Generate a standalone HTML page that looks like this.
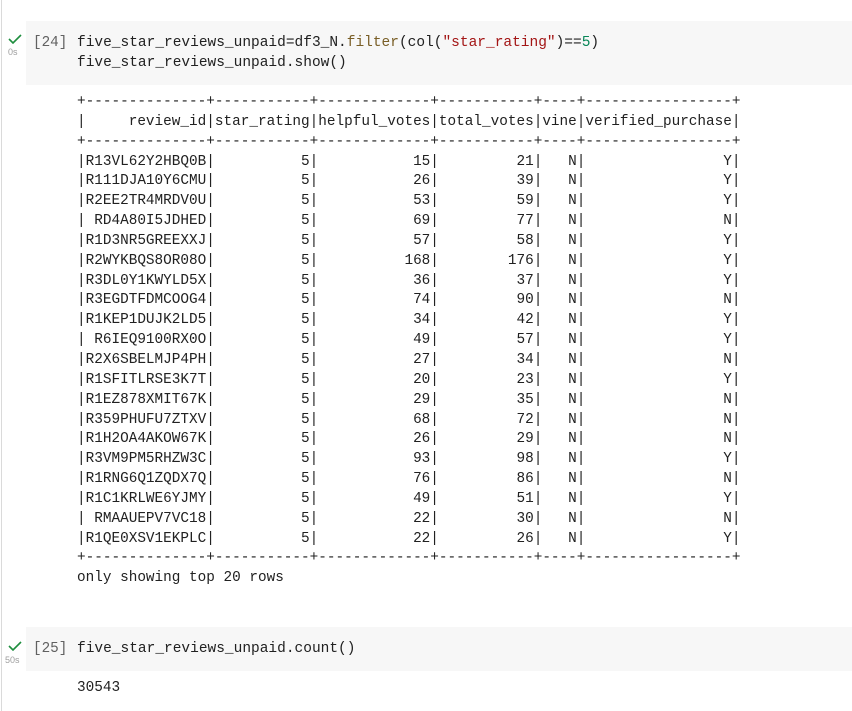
<!DOCTYPE html>
<html><head><meta charset="utf-8"><style>
body{margin:0;width:852px;height:711px;background:#fff;position:relative;overflow:hidden;font-family:"Liberation Mono",monospace;color:#212121}
.vl{position:absolute;left:1px;top:0;width:1px;height:711px;background:#dadada}
.cell{position:absolute;left:26px;width:826px;background:#f7f7f7}
.code{position:absolute;left:77px;font-size:14.5px;line-height:20px;white-space:pre}
.num{position:absolute;left:33px;font-size:14.3px;color:#616161;white-space:pre}
.chk{position:absolute;left:8px}
.t{position:absolute;font-family:"Liberation Sans",sans-serif;font-size:9px;color:#9e9e9e}
.out{position:absolute;left:77px;font-size:14.37px;line-height:19.84px;white-space:pre}
</style></head><body>
<div class="vl"></div>
<div class="cell" style="top:21px;height:64px"></div>
<svg class="chk" style="top:34px" width="14" height="10" viewBox="0 0 14 10"><path d="M1 5 L5 9 L13 1" fill="none" stroke="#1e8e3e" stroke-width="1.6"/></svg>
<div class="t" style="left:8px;top:47px">0s</div>
<div class="num" style="top:33px;line-height:20px">[24]</div>
<div class="code" style="top:33px">five_star_reviews_unpaid=df3_N.<span style="color:#795e26">filter</span>(col(<span style="color:#a31515">"star_rating"</span>)==<span style="color:#098658">5</span>)
five_star_reviews_unpaid.show()</div>
<div class="out" style="top:93px">+--------------+-----------+-------------+-----------+----+-----------------+
|     review_id|star_rating|helpful_votes|total_votes|vine|verified_purchase|
+--------------+-----------+-------------+-----------+----+-----------------+
|R13VL62Y2HBQ0B|          5|           15|         21|   N|                Y|
|R111DJA10Y6CMU|          5|           26|         39|   N|                Y|
|R2EE2TR4MRDV0U|          5|           53|         59|   N|                Y|
| RD4A80I5JDHED|          5|           69|         77|   N|                N|
|R1D3NR5GREEXXJ|          5|           57|         58|   N|                Y|
|R2WYKBQS8OR08O|          5|          168|        176|   N|                Y|
|R3DL0Y1KWYLD5X|          5|           36|         37|   N|                Y|
|R3EGDTFDMCOOG4|          5|           74|         90|   N|                N|
|R1KEP1DUJK2LD5|          5|           34|         42|   N|                Y|
| R6IEQ9100RX0O|          5|           49|         57|   N|                Y|
|R2X6SBELMJP4PH|          5|           27|         34|   N|                N|
|R1SFITLRSE3K7T|          5|           20|         23|   N|                Y|
|R1EZ878XMIT67K|          5|           29|         35|   N|                N|
|R359PHUFU7ZTXV|          5|           68|         72|   N|                N|
|R1H2OA4AKOW67K|          5|           26|         29|   N|                N|
|R3VM9PM5RHZW3C|          5|           93|         98|   N|                Y|
|R1RNG6Q1ZQDX7Q|          5|           76|         86|   N|                N|
|R1C1KRLWE6YJMY|          5|           49|         51|   N|                Y|
| RMAAUEPV7VC18|          5|           22|         30|   N|                N|
|R1QE0XSV1EKPLC|          5|           22|         26|   N|                Y|
+--------------+-----------+-------------+-----------+----+-----------------+
only showing top 20 rows</div>
<div class="cell" style="top:627px;height:44px"></div>
<svg class="chk" style="top:641px" width="14" height="10" viewBox="0 0 14 10"><path d="M1 5 L5 9 L13 1" fill="none" stroke="#1e8e3e" stroke-width="1.6"/></svg>
<div class="t" style="left:5px;top:655px">50s</div>
<div class="num" style="top:639px;line-height:20px">[25]</div>
<div class="code" style="top:639px">five_star_reviews_unpaid.count()</div>
<div class="out" style="top:679px">30543</div>
</body></html>
